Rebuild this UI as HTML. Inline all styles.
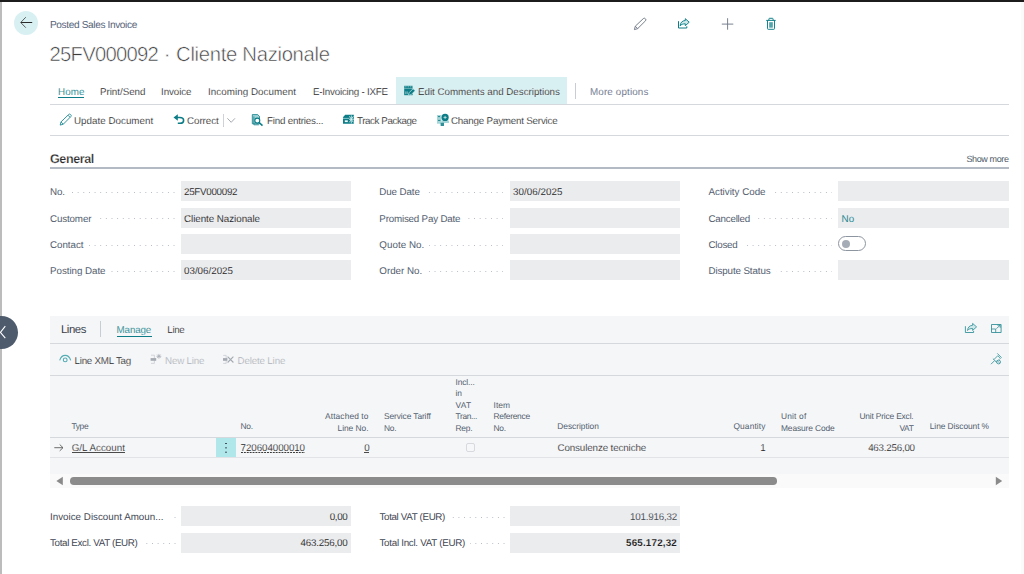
<!DOCTYPE html>
<html lang="en">
<head>
<meta charset="utf-8">
<title>Posted Sales Invoice - 25FV000092 · Cliente Nazionale</title>
<style>
*{box-sizing:border-box;margin:0;padding:0}
html,body{width:1024px;height:574px;overflow:hidden;background:#fff}
body{position:relative;font-family:"Liberation Sans",sans-serif;font-size:10px;color:#212121;-webkit-font-smoothing:antialiased;text-rendering:geometricPrecision}
.a{position:absolute;white-space:nowrap;line-height:12px}
.topbar{left:0;top:0;width:1024px;height:1.7px;background:#1c1c1c}
.leftbar{left:0;top:1.7px;width:1.9px;height:573px;background:#bcbcbc}
.rightbar{left:1021.3px;top:2px;width:3px;height:572px;background:#fbfbfb}
.back{left:13.8px;top:10.9px;width:24.4px;height:24.4px;border-radius:50%;background:#d9f0f2}
.collapse{left:-14.6px;top:315.8px;width:33px;height:33px;border-radius:50%;background:#4e5b6d}
.crumb{left:50px;top:20.2px;color:#56647a;font-size:10.1px}
.title{left:49.5px;top:42px;font-size:20.3px;line-height:26px;color:#3c3c3c;-webkit-text-stroke:0.55px #fff}
.tab{top:87px;font-size:9.8px;color:#2b2b2b}
.teal{color:#0c7c86 !important}
.hl{left:395.8px;top:77.4px;width:171.2px;height:26.6px;background:#d9f0f2}
.hline{height:1px;background:#d5d8dc}
.act{top:116px;font-size:9.8px;color:#2b2b2b}
.dis{color:#adb2b9}
.sect{left:50px;top:152px;font-size:12.6px;font-weight:bold;color:#2b2b2b;line-height:15px;-webkit-text-stroke:0.25px #fff}
.lbl{font-size:9.8px;color:#56627a}
.lbl{color:#535e6f}
.box{width:170px;height:20px;background:#ebecee}
.val{font-size:9.8px;color:#1f1f1f}
.dots{height:1.2px;background-image:linear-gradient(to left,#b6bcc4 1.2px,transparent 1.2px);background-size:5.65px 1.2px;background-repeat:repeat-x;background-position:right top}
.panel{left:50px;top:316px;width:959px;height:158px;background:#f5f6f8}
.sbar{left:50px;top:474px;width:959px;height:14px;background:#fafafa}
.th{font-size:8.4px;line-height:11.4px;color:#535e6e;white-space:pre}
.td{font-size:9.8px;color:#1f1f1f}
svg{position:absolute;overflow:visible}
/*THIN*/
.tab,.act{-webkit-text-stroke:0.12px #fff}
.val{-webkit-text-stroke:0.08px #ebecee}
.td{-webkit-text-stroke:0.15px #f5f6f8}
</style>
</head>
<body>
<div class="a topbar"></div>
<div class="a leftbar"></div>
<div class="a rightbar"></div>

<!-- header -->
<div class="a back"></div>
<div class="a crumb" id="crumb" style="letter-spacing:-0.368px">Posted Sales Invoice</div>
<div class="a title"><span id="ti1" style="letter-spacing:-0.756px;">25FV000092</span><span id="ti2" style="letter-spacing:-0.01px;"> · </span><span id="ti3" style="letter-spacing:-0.316px;">Cliente Nazionale</span></div>

<div class="a collapse"></div>

<!-- header icons -->

<!-- tabs -->
<div class="a hl"></div>
<div class="a tab teal" id="t1" style="letter-spacing:0.065px;left:58px">Home</div>
<div class="a" style="left:58px;top:97px;width:26px;height:1px;background:#0c7c86"></div>
<div class="a tab" id="t2" style="letter-spacing:-0.035px;left:100px">Print/Send</div>
<div class="a tab" id="t3" style="letter-spacing:-0.078px;left:161px">Invoice</div>
<div class="a tab" id="t4" style="letter-spacing:0.057px;left:208px">Incoming Document</div>
<div class="a tab" id="t5" style="letter-spacing:-0.225px;left:313px">E-Invoicing - IXFE</div>
<div class="a tab" id="t6" style="letter-spacing:-0.026px;left:418px">Edit Comments and Descriptions</div>
<div class="a" style="left:575px;top:83px;width:1px;height:16px;background:#c9cdd2"></div>
<div class="a tab" id="t7" style="letter-spacing:0.155px;left:590px;color:#56627a">More options</div>
<div class="a hline" style="left:50px;top:104px;width:959px"></div>

<!-- action bar -->
<div class="a act" id="a1" style="letter-spacing:0.015px;left:74px">Update Document</div>
<div class="a act" id="a2" style="letter-spacing:-0.061px;left:187px">Correct</div>
<div class="a" style="left:223px;top:114px;width:1px;height:13px;background:#c9cdd2"></div>
<div class="a act" id="a3" style="letter-spacing:-0.211px;left:267px">Find entries...</div>
<div class="a act" id="a4" style="letter-spacing:-0.422px;left:357px">Track Package</div>
<div class="a act" id="a5" style="letter-spacing:-0.209px;left:451px">Change Payment Service</div>
<div class="a hline" style="left:50px;top:135px;width:959px"></div>

<!-- General -->
<div class="a sect" id="g0" style="letter-spacing:-0.451px">General</div>
<div class="a lbl" id="sm" style="letter-spacing:-0.392px;left:966.5px;top:153px;font-size:9px;color:#4d5766">Show more</div>
<div class="a" style="left:50px;top:167px;width:959px;height:2px;background:#b4bac3"></div>
<!-- fields -->
<div class="a dots" style="left:55px;top:192.0px;width:119.5px"></div>
<div class="a lbl" id="l1" style="letter-spacing:-0.183px;left:50px;top:187.3px;background:#fff;padding-right:5px">No.</div>
<div class="a box" style="left:180.5px;top:181.3px;width:170px"></div>
<div class="a val" id="v1" style="letter-spacing:-0.291px;left:184.0px;top:187.3px">25FV000092</div>
<div class="a dots" style="left:55px;top:218.2px;width:119.5px"></div>
<div class="a lbl" id="l2" style="letter-spacing:-0.146px;left:50px;top:213.5px;background:#fff;padding-right:5px">Customer</div>
<div class="a box" style="left:180.5px;top:207.5px;width:170px"></div>
<div class="a val" id="v2" style="letter-spacing:-0.047px;left:184.0px;top:213.5px">Cliente Nazionale</div>
<div class="a dots" style="left:55px;top:244.6px;width:119.5px"></div>
<div class="a lbl" id="l3" style="letter-spacing:-0.038px;left:50px;top:239.9px;background:#fff;padding-right:5px">Contact</div>
<div class="a box" style="left:180.5px;top:233.9px;width:170px"></div>
<div class="a dots" style="left:55px;top:270.9px;width:119.5px"></div>
<div class="a lbl" id="l4" style="letter-spacing:-0.049px;left:50px;top:266.2px;background:#fff;padding-right:5px">Posting Date</div>
<div class="a box" style="left:180.5px;top:260.2px;width:170px"></div>
<div class="a val" id="v4" style="letter-spacing:-0.005px;left:184.0px;top:266.2px">03/06/2025</div>
<div class="a dots" style="left:384.3px;top:192.0px;width:119.2px"></div>
<div class="a lbl" id="l5" style="letter-spacing:-0.111px;left:379.3px;top:187.3px;background:#fff;padding-right:5px">Due Date</div>
<div class="a box" style="left:509.5px;top:181.3px;width:170px"></div>
<div class="a val" id="v5" style="letter-spacing:0.045px;left:513.0px;top:187.3px">30/06/2025</div>
<div class="a dots" style="left:384.3px;top:218.2px;width:119.2px"></div>
<div class="a lbl" id="l6" style="letter-spacing:-0.2px;left:379.3px;top:213.5px;background:#fff;padding-right:5px">Promised Pay Date</div>
<div class="a box" style="left:509.5px;top:207.5px;width:170px"></div>
<div class="a dots" style="left:384.3px;top:244.6px;width:119.2px"></div>
<div class="a lbl" id="l7" style="letter-spacing:0.038px;left:379.3px;top:239.9px;background:#fff;padding-right:5px">Quote No.</div>
<div class="a box" style="left:509.5px;top:233.9px;width:170px"></div>
<div class="a dots" style="left:384.3px;top:270.9px;width:119.2px"></div>
<div class="a lbl" id="l8" style="letter-spacing:-0.002px;left:379.3px;top:266.2px;background:#fff;padding-right:5px">Order No.</div>
<div class="a box" style="left:509.5px;top:260.2px;width:170px"></div>
<div class="a dots" style="left:713.5px;top:192.0px;width:118.5px"></div>
<div class="a lbl" id="l9" style="letter-spacing:-0.013px;left:708.5px;top:187.3px;background:#fff;padding-right:5px">Activity Code</div>
<div class="a box" style="left:838px;top:181.3px;width:170.5px"></div>
<div class="a dots" style="left:713.5px;top:218.2px;width:118.5px"></div>
<div class="a lbl" id="l10" style="letter-spacing:-0.231px;left:708.5px;top:213.5px;background:#fff;padding-right:5px">Cancelled</div>
<div class="a box" style="left:838px;top:207.5px;width:170.5px"></div>
<div class="a val teal" id="v10" style="letter-spacing:0.234px;left:841.5px;top:213.5px">No</div>
<div class="a dots" style="left:713.5px;top:244.6px;width:118.5px"></div>
<div class="a lbl" id="l11" style="letter-spacing:-0.25px;left:708.5px;top:239.9px;background:#fff;padding-right:5px">Closed</div>
<div class="a" style="left:838px;top:236.0px;width:28px;height:15px;border:1px solid #8d95a0;border-radius:7.5px;background:#fff"></div>
<div class="a" style="left:841.5px;top:239.5px;width:8px;height:8px;border-radius:50%;background:#a6acb5"></div>
<div class="a dots" style="left:713.5px;top:270.9px;width:118.5px"></div>
<div class="a lbl" id="l12" style="letter-spacing:-0.123px;left:708.5px;top:266.2px;background:#fff;padding-right:5px">Dispute Status</div>
<div class="a box" style="left:838px;top:260.2px;width:170.5px"></div>
<!-- Lines -->
<div class="a panel"></div>
<div class="a sbar"></div>
<div class="a" id="ln0" style="letter-spacing:-0.467px;left:61px;top:323px;font-size:11.4px;line-height:14px;color:#3a3f48">Lines</div>
<div class="a" style="left:100px;top:321px;width:1px;height:16px;background:#c9cdd2"></div>
<div class="a tab teal" id="ln1" style="letter-spacing:-0.151px;left:116.6px;top:325px">Manage</div>
<div class="a" style="left:116.6px;top:336px;width:35px;height:1px;background:#0c7c86"></div>
<div class="a tab" id="ln2" style="letter-spacing:-0.333px;left:167.3px;top:325px">Line</div>
<div class="a hline" style="left:50px;top:343px;width:959px"></div>

<div class="a act" id="ln3" style="letter-spacing:-0.24px;left:74.5px;top:355.6px">Line XML Tag</div>
<div class="a act dis" id="ln4" style="letter-spacing:-0.193px;left:165px;top:355.6px">New Line</div>
<div class="a act dis" id="ln5" style="letter-spacing:-0.171px;left:237.5px;top:355.6px">Delete Line</div>
<div class="a hline" style="left:50px;top:375px;width:959px"></div>

<!-- table header -->
<div class="a th" id="h1" style="letter-spacing:-0.364px;left:71.5px;top:421px">Type</div>
<div class="a th" id="h2" style="letter-spacing:-0.182px;left:240.5px;top:421px">No.</div>
<div class="a th" id="h3a" style="letter-spacing:0.093px;right:655.5px;top:411.2px">Attached to</div>
<div class="a th" id="h3b" style="letter-spacing:-0.025px;right:655.5px;top:422.6px">Line No.</div>
<div class="a th" id="h4a" style="letter-spacing:-0.101px;left:384px;top:411.2px">Service Tariff</div>
<div class="a th" id="h4b" style="letter-spacing:-0.182px;left:384px;top:422.6px">No.</div>
<div class="a th" id="h5a" style="letter-spacing:-0.102px;left:455.5px;top:377px">Incl...</div>
<div class="a th" id="h5b" style="letter-spacing:-0.016px;left:455.5px;top:388.4px">in</div>
<div class="a th" id="h5c" style="letter-spacing:0.318px;left:455.5px;top:399.8px">VAT</div>
<div class="a th" id="h5d" style="letter-spacing:-0.342px;left:455.5px;top:411.2px">Tran...</div>
<div class="a th" id="h5e" style="letter-spacing:-0.176px;left:455.5px;top:422.6px">Rep.</div>
<div class="a th" id="h6a" style="letter-spacing:0.051px;left:493.5px;top:399.8px">Item</div>
<div class="a th" id="h6b" style="letter-spacing:-0.26px;left:493.5px;top:411.2px">Reference</div>
<div class="a th" id="h6c" style="letter-spacing:-0.182px;left:493.5px;top:422.6px">No.</div>
<div class="a th" id="h7" style="letter-spacing:-0.028px;left:557.3px;top:421px">Description</div>
<div class="a th" id="h8" style="letter-spacing:0.1px;right:258.5px;top:421px">Quantity</div>
<div class="a th" id="h9a" style="letter-spacing:0.169px;left:781px;top:411.2px">Unit of</div>
<div class="a th" id="h9b" style="letter-spacing:-0.111px;left:781px;top:422.6px">Measure Code</div>
<div class="a th" id="h10a" style="letter-spacing:-0.168px;right:110.5px;top:411.2px">Unit Price Excl.</div>
<div class="a th" id="h10b" style="letter-spacing:-0.349px;right:110.5px;top:422.6px">VAT</div>
<div class="a th" id="h11" style="letter-spacing:-0.089px;left:929.8px;top:421px">Line Discount %</div>
<div class="a hline" style="left:50px;top:437px;width:959px"></div>

<!-- row -->
<div class="a td" id="r1" style="letter-spacing:0.026px;left:71.7px;top:443.4px">G/L Account</div>
<div class="a" style="left:216px;top:438px;width:20.2px;height:19.3px;background:#afe7ea"></div>
<div class="a" style="left:225.3px;top:442.9px;width:1.5px;height:1.5px;background:#46505d;box-shadow:0 4.35px 0 #46505d,0 8.7px 0 #46505d"></div>
<div class="a td" id="r2" style="letter-spacing:-0.083px;left:240.6px;top:443.4px">720604000010</div>
<div class="a td" id="r3" style="letter-spacing:-0.153px;right:654.5px;top:443.4px">0</div>
<div class="a" style="left:466.3px;top:442.8px;width:9.2px;height:9.2px;border:1px solid #d6d9dd;border-radius:2px;background:#f6f7f8"></div>
<div class="a td" id="r4" style="letter-spacing:-0.124px;left:557.5px;top:443.4px">Consulenze tecniche</div>
<div class="a td" id="r5" style="right:258.2px;top:443.4px">1</div>
<div class="a td" id="r6" style="letter-spacing:-0.235px;right:109.2px;top:443.4px">463.256,00</div>
<div class="a" style="left:71.7px;top:451.9px;width:53.3px;height:0.8px;background:#4a4a4a"></div>
<div class="a" style="left:240.6px;top:451.8px;width:64.2px;height:1.1px;background-image:linear-gradient(to right,#3a3a3a 1.7px,transparent 1.7px);background-size:2.9px 1.1px;background-repeat:repeat-x"></div>
<div class="a" style="left:364px;top:451.9px;width:5.4px;height:0.8px;background:#4a4a4a"></div>
<div class="a hline" style="left:50px;top:457px;width:959px;background:#e1e3e6"></div>

<!-- scrollbar -->
<div class="a" style="left:69.7px;top:477px;width:707px;height:7.6px;border-radius:3.8px;background:#8b8b8b"></div>

<!-- totals -->
<div class="a dots" style="left:55px;top:517px;width:120.5px"></div>
<div class="a lbl" id="tl1" style="letter-spacing:0.005px;left:50px;top:512.1px;background:#fff;padding-right:9px;color:#3f4753">Invoice Discount Amoun...</div>
<div class="a box" style="left:181px;top:506px;height:20px"></div>
<div class="a val" id="tv1" style="letter-spacing:-0.32px;right:676.5px;top:512.1px">0,00</div>
<div class="a dots" style="left:55px;top:543px;width:120.5px"></div>
<div class="a lbl" id="tl2" style="letter-spacing:-0.344px;left:50px;top:538.1px;background:#fff;padding-right:5px;color:#3f4753">Total Excl. VAT (EUR)</div>
<div class="a box" style="left:181px;top:533px;height:20px"></div>
<div class="a val" id="tv2" style="letter-spacing:-0.215px;right:676.5px;top:538.1px">463.256,00</div>

<div class="a dots" style="left:384px;top:517px;width:120.5px"></div>
<div class="a lbl" id="tl3" style="letter-spacing:-0.352px;left:379.5px;top:512.1px;background:#fff;padding-right:5px;color:#3f4753">Total VAT (EUR)</div>
<div class="a box" style="left:510px;top:506px;height:20px"></div>
<div class="a val" id="tv3" style="letter-spacing:-0.205px;right:347px;top:512.1px;color:#41464e">101.916,32</div>
<div class="a dots" style="left:384px;top:543px;width:120.5px"></div>
<div class="a lbl" id="tl4" style="letter-spacing:-0.284px;left:379.5px;top:538.1px;background:#fff;padding-right:5px;color:#3f4753">Total Incl. VAT (EUR)</div>
<div class="a box" style="left:510px;top:533px;height:20px"></div>
<div class="a val" id="tv4" style="letter-spacing:0.195px;right:347px;top:538.1px;font-weight:bold">565.172,32</div>
<!-- icons overlay (absolute coordinates) -->
<svg style="left:0;top:0;pointer-events:none" width="1024" height="574" viewBox="0 0 1024 574" fill="none">
<!-- back arrow -->
<path d="M32.2 22.5H21" stroke="#2a2a2a" stroke-width="1"/><path d="M25.8 17.2L20.7 22.5l5.1 5.2" stroke="#3a3a3a" stroke-width="0.8"/>
<!-- collapse chevron -->
<path d="M5.3 326.2L0.4 332.3l4.9 5.9" stroke="#fff" stroke-width="1.1"/>
<!-- header: edit pencil -->
<path d="M634.4 29.6l0.9-3.4 8-7.6a1.35 1.35 0 0 1 1.9 0l0.3 0.3a1.35 1.35 0 0 1 0 1.9l-7.8 7.8zM635.3 26.2l2.4 2.4" stroke="#6f7887" stroke-width="0.95"/>
<!-- header: share -->
<path d="M678.5 21.2V28h8.3v-1.7" stroke="#0c7c86" stroke-width="1"/>
<path d="M685.3 18.7l3.9 3.5-3.9 3.5v-1.9c-2.4 0-4 0.6-5.2 2 0.3-3.1 2-5.1 5.2-5.3z" stroke="#0c7c86" stroke-width="0.95" stroke-linejoin="round" fill="#cfe9eb"/>
<!-- header: plus -->
<path d="M727.6 18.2v11.5M721.8 24.1h11.5" stroke="#737c8a" stroke-width="0.95"/>
<!-- header: trash -->
<path d="M766.2 20.4h9.5M768.9 20.4v-1.4q0-0.7 0.7-0.7h2.8q0.7 0 0.7 0.7v1.4M767.5 20.4v8.2q0 0.7 0.7 0.7h5.6q0.7 0 0.7-0.7v-8.2" stroke="#0c7c86" stroke-width="0.95"/>
<path d="M769.3 22.2h3.4v5.4h-3.4z" fill="#7cc0c5"/>
<path d="M769.8 22.2v5.4M771 22.2v5.4M772.2 22.2v5.4" stroke="#0c7c86" stroke-width="0.5"/>
<!-- tab icon: edit comments -->
<path d="M404.2 85.800h8.400v9.400h-8.400z" fill="#0c7c86"/>
<path d="M404.800 86.400h0.900v0.900h-0.900zM406.500 86.400h0.900v0.900h-0.900zM408.200 86.400h0.900v0.900h-0.900zM409.900 86.400h0.900v0.900h-0.900zM411.600 86.400h0.900v0.900h-0.900z" fill="#d9f0f2"/>
<path d="M404.200 88.500h8.400" stroke="#d9f0f2" stroke-width="0.5" opacity="0.8"/>
<path d="M405.800 91.400v2.800M407.200 91.400v2.800" stroke="#d9f0f2" stroke-width="0.6"/>
<path d="M408.400 95.400l0.700-2.700 4-4 2 2-4 4z" fill="#0c7c86" stroke="#d9f0f2" stroke-width="0.700"/>
<!-- action: update document pencil -->
<path d="M60.2 125.1l0.8-3.2 7.7-7.4a1.3 1.3 0 0 1 1.85 0l0.25 0.25a1.3 1.3 0 0 1 0 1.85l-7.5 7.6zM61 121.9l2.3 2.3M68 115.2l2.1 2.1" stroke="#2a8f98" stroke-width="0.95"/>
<!-- action: correct (undo) -->
<path d="M176.500 117.500h3.300c2.400 0 3.800 1.200 3.800 2.900 0 1.700-1.300 2.900-3.400 2.900h-2.400" stroke="#0c7c86" stroke-width="1.600"/>
<path d="M173.500 117.500l4.300-3.300v6.600z" fill="#0c7c86"/>
<path d="M223.500 114.200v11.600" stroke="#cfd2d6" stroke-width="1"/>
<path d="M227.400 118.300l3.800 4 3.800-4" stroke="#8d949e" stroke-width="0.8"/>
<!-- action: find entries -->
<path d="M252.300 114.600h5.400l1.800 1.800v7.400h-7.200z" fill="#9fd3d7" stroke="#0c7c86" stroke-width="0.8"/>
<path d="M253.900 116.400v8.400h5" stroke="#0c7c86" stroke-width="0.8"/>
<circle cx="257.300" cy="120.600" r="2.500" fill="#fff" stroke="#0c7c86" stroke-width="1.100"/>
<path d="M259.200 122.600l3.300 3" stroke="#0c7c86" stroke-width="1.500"/>
<!-- action: track package -->
<path d="M343 117.200l2.200-2.400h8.600v9H343z" fill="#0c7c86"/>
<path d="M343 118.400h6.200" stroke="#8fcdd2" stroke-width="0.9"/>
<path d="M344.800 120.300h3v1.800h-3z" fill="#eef8f9"/>
<path d="M349 119.300h4.800M351.300 115.400v8M349.400 116.300l3.900 6M353.300 116.300l-3.900 6" stroke="#d9f0f2" stroke-width="0.85"/>
<!-- action: change payment service -->
<path d="M437 115h4.400v8.700H437z" fill="#a3d5d9"/>
<path d="M438 116.600h2M438 120.400h2.400" stroke="#0c7c86" stroke-width="0.9"/>
<path d="M441.400 120.600h7.600v2.400h-7.600z" fill="#a3d5d9"/>
<circle cx="445.100" cy="117.400" r="3.600" fill="#0c7c86"/>
<path d="M445.100 115.800v3.200M443.500 117.400h3.200" stroke="#e6f4f5" stroke-width="0.7"/>
<path d="M440.600 122.800h3.400v2.600q0 0.500-0.500 0.500h-2.400q-0.500 0-0.500-0.500z" fill="#2f9099"/>
<!-- lines: share -->
<path d="M965.400 326.200v6.300h8.200v-1.600" stroke="#2a8d96" stroke-width="0.85"/>
<path d="M972.600 323.400l4 3.500-4 3.500v-1.900c-2.400 0-3.900 0.600-5.100 2 0.300-3.100 1.900-5 5.100-5.200z" stroke="#2a8d96" stroke-width="0.8" stroke-linejoin="round" fill="#cfe9eb"/>
<!-- lines: expand -->
<path d="M991.500 324.500h9.600v8h-9.600z" stroke="#2a8d96" stroke-width="0.85"/>
<path d="M991.500 329h4.200v3.500" stroke="#2a8d96" stroke-width="0.8"/>
<path d="M996.400 328.600l3.600-3.200M997.400 325.200h2.800v2.600" stroke="#2a8d96" stroke-width="0.8"/>
<!-- lines: eye -->
<path d="M59.700 360.300c1-3.200 3-4.900 5.500-4.900s4.500 1.700 5.500 4.900" stroke="#55adb4" stroke-width="1.100"/>
<circle cx="65.200" cy="359.900" r="1.900" stroke="#55adb4" stroke-width="1.100"/>
<!-- lines: new line (disabled) -->
<path d="M151 355.200h3.400v8.200H151" stroke="#c9cdd2" stroke-width="0.8"/>
<path d="M150.600 358.100h5.600v2.700h-5.600z" fill="#a4aab2"/>
<path d="M158.900 353.900v4.800M156.500 356.300h4.800M157.200 354.600l3.400 3.400M160.600 354.600l-3.400 3.400" stroke="#a9afb6" stroke-width="0.8"/>
<!-- lines: delete line (disabled) -->
<path d="M223.200 355.400h3v8h-3" stroke="#c9cdd2" stroke-width="0.8"/>
<path d="M223 358.100h4.400v2.700H223z" fill="#a4aab2"/>
<path d="M227.600 356.600l5.800 5.900M233.400 356.600l-5.800 5.900" stroke="#a4aab2" stroke-width="1.100"/>
<!-- lines: pin -->
<path d="M991 364.200l3.600-3.600M992.900 358.600l4.100 4.100M993.900 359.600l3.900-3.900M996 361.700l1.200-1.200M997.300 353.400l4.300 4.300M997.800 355.700l2.600 2.600-1.300 1.300" stroke="#2a8d96" stroke-width="0.8"/>
<circle cx="998.600" cy="362" r="1.900" stroke="#2a8d96" stroke-width="0.8" fill="#f5f6f8"/>
<path d="M997.400 360.800l2.400 2.400" stroke="#2a8d96" stroke-width="0.7"/>
<!-- row arrow -->
<path d="M54.300 447.700h8.600M59.700 444.500l3.300 3.200-3.300 3.200" stroke="#555" stroke-width="0.85"/>
<!-- scrollbar arrows -->
<path d="M62.800 476.700v8.600L56.400 481z" fill="#8a8a8a"/>
<path d="M995.800 476.700v8.600l6.400-4.300z" fill="#8a8a8a"/>
</svg>

</body>
</html>
